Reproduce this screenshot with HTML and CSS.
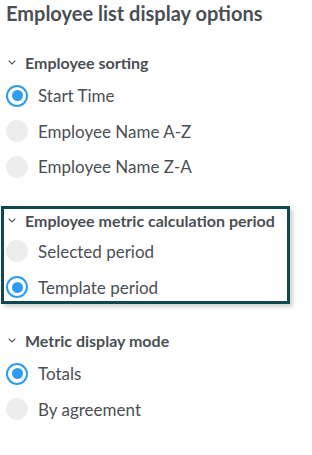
FILE: index.html
```html
<!DOCTYPE html>
<html lang="en">
<head>
    <meta charset="UTF-8">
    <meta name="viewport" content="width=device-width, initial-scale=1.0">
    <title>Employee list display options</title>
    <link rel="stylesheet" href="styles.css">
</head>
<body>
    <h1 class="panel-title">Employee list display options</h1>

    <div class="group">
        <div class="group-head">
            <svg class="chevron" viewBox="0 0 8 5" width="8" height="5"><path d="M0.7 0.7 L4 4 L7.3 0.7" fill="none" stroke="#4a5056" stroke-width="1.2"/></svg>
            <span>Employee sorting</span>
        </div>
        <div class="option"><span class="radio checked"></span>Start Time</div>
        <div class="option"><span class="radio"></span>Employee Name A-Z</div>
        <div class="option"><span class="radio"></span>Employee Name Z-A</div>
    </div>

    <div class="group group-focus">
        <div class="group-head">
            <svg class="chevron" viewBox="0 0 8 5" width="8" height="5"><path d="M0.7 0.7 L4 4 L7.3 0.7" fill="none" stroke="#4a5056" stroke-width="1.2"/></svg>
            <span>Employee metric calculation period</span>
        </div>
        <div class="option"><span class="radio"></span>Selected period</div>
        <div class="option"><span class="radio checked"></span>Template period</div>
    </div>

    <div class="group group-after">
        <div class="group-head">
            <svg class="chevron" viewBox="0 0 8 5" width="8" height="5"><path d="M0.7 0.7 L4 4 L7.3 0.7" fill="none" stroke="#4a5056" stroke-width="1.2"/></svg>
            <span>Metric display mode</span>
        </div>
        <div class="option"><span class="radio checked"></span>Totals</div>
        <div class="option"><span class="radio"></span>By agreement</div>
    </div>
</body>
</html>
```

FILE: styles.css
```css
body {
    font-family: Lato, 'Noto Sans', sans-serif;
    color: #4a4f55;
    margin: 0;
    padding: 0 6px;
    background-color: #fff;
}
.panel-title {
    font-size: 20px;
    font-weight: 700;
    margin: 0;
    padding-top: 2px;
    line-height: 22px;
}
.group {
    margin-top: 22px;
}
.group-head {
    display: flex;
    align-items: center;
    height: 32px;
    font-size: 16px;
    font-weight: 700;
}
.chevron {
    margin: 0 9px 0 2px;
}
.option {
    display: flex;
    align-items: center;
    height: 35.5px;
    font-size: 17px;
}
.radio {
    width: 22px;
    height: 22px;
    border-radius: 50%;
    background-color: #ededed;
    margin-right: 10px;
    box-sizing: border-box;
    flex-shrink: 0;
    display: flex;
    align-items: center;
    justify-content: center;
}
.radio.checked {
    background-color: #fff;
    border: 2.5px solid #2e9cf0;
}
.radio.checked::after {
    content: '';
    width: 11px;
    height: 11px;
    border-radius: 50%;
    background-color: #2e9cf0;
}
.group-focus {
    margin-top: 21px;
    margin-left: -5px;
    margin-right: 16px;
    padding-left: 2px;
    border: 3px solid #11474f;
    box-shadow: 3px 3px 4px rgba(0, 0, 0, 0.18);
}
.group-focus .group-head {
    height: 23px;
    padding-bottom: 2px;
}
.group-focus .option {
    height: 35.8px;
}
.group-focus .option:last-child {
    margin-bottom: -4px;
}
.group-after {
    margin-top: 20px;
}
```
